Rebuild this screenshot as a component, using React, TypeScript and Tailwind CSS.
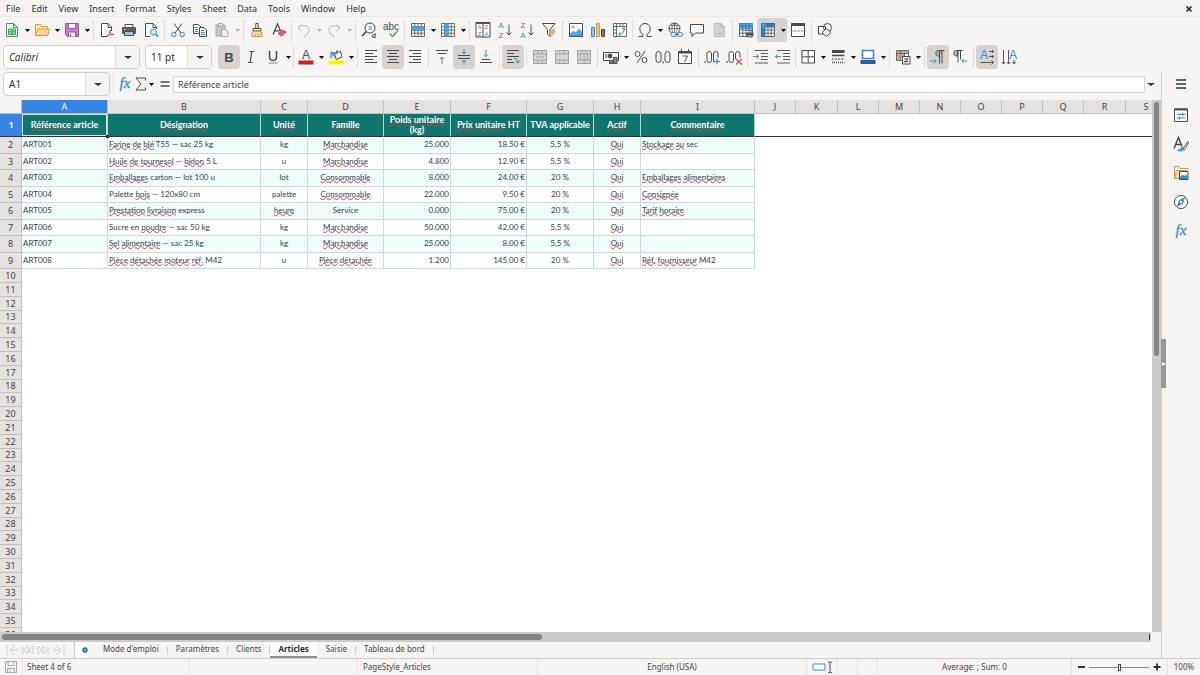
import type { ReactNode } from "react";
import clsx from "clsx";

const INK = "#4a4a48";
const BLUE = "#2f8fd8";
const ORANGE = "#e8923a";
const RED = "#e0404a";
const GREEN = "#3aa655";
const PURPLE = "#a34fb0";

function Glyph({ x, y, size = 8, fill = INK, bold, children }: { x: number; y: number; size?: number; fill?: string; bold?: boolean; children: string }) {
  return (
    <text x={x} y={y} fontSize={size} fill={fill} stroke="none" textAnchor="middle" fontWeight={bold ? 700 : 400}>
      {children}
    </text>
  );
}

const gridLines = "M1.5 1.5h13v13h-13zM1.5 4.8h13M1.5 8h13M1.5 11.2h13M4.8 1.5v13M8 1.5v13M11.2 1.5v13";

const icons: Record<string, ReactNode> = {
  new: (
    <>
      <path d="M2.500 1.500h7l4 4v9h-11z" fill="#fff" stroke={GREEN} />
      <path d="M9.500 1.500v4h4" stroke={GREEN} />
      <path d="M4.500 7h7v5.500h-7zM4.500 9.800h7M8 7v5.500" fill="#9bdcab" stroke={GREEN} />
    </>
  ),
  open: (
    <>
      <path d="M1.500 13.500v-11h5l1 2h6v3" fill="#fbe3b8" stroke={ORANGE} />
      <path d="M1.500 13.500l2.500-6.500h11.500l-2 6.500z" fill="#fcd9a0" stroke={ORANGE} />
    </>
  ),
  save: (
    <>
      <path d="M1.500 1.500h13v13h-11l-2-2z" fill="#c779d2" stroke={PURPLE} />
      <path d="M4.500 1.500h7v5h-7z" fill="#fff" stroke={PURPLE} />
      <path d="M4.500 14.500v-4.500h7v4.500" fill="#fff" stroke={PURPLE} />
      <path d="M6.500 11.500v3" stroke={PURPLE} />
    </>
  ),
  pdf: (
    <>
      <path d="M12.500 9v-4l-3.500-3.500h-6.500v13h6" fill="#fff" />
      <path d="M9 1.500v4h3.500" />
      <path d="M8 14.500c2.500-2.500 3.500-4.500 3.200-6.500-.8 3 1.300 5 3.800 4.500-2.500-.5-5 .5-7 2z" stroke={RED} />
    </>
  ),
  print: (
    <>
      <path d="M4 5.500v-3h8v3" fill="#fff" />
      <rect x="1" y="5" width="14" height="7" rx="1" fill="#5a5a58" stroke="none" />
      <path d="M3.500 9.500h9v4h-9z" fill="#8cc8f0" />
      <path d="M3 7.500h1.500" stroke="#fff" />
    </>
  ),
  preview: (
    <>
      <path d="M13.500 7v-2l-3.500-3.500h-7.500v13h5" fill="#fff" />
      <path d="M10 1.500v4h3.500" />
      <circle cx="10.500" cy="10" r="3" fill="#cfe6f8" stroke={BLUE} />
      <path d="M12.800 12.300l2.200 2.400" stroke={BLUE} strokeWidth="1.500" />
    </>
  ),
  cut: (
    <>
      <path d="M4 1.500l7 9.500M12 1.500l-7 9.500" />
      <circle cx="3.800" cy="12.500" r="2.200" stroke={BLUE} />
      <circle cx="12.200" cy="12.500" r="2.200" stroke={BLUE} />
    </>
  ),
  copy: (
    <>
      <path d="M1.500 2.500h5l2.500 2.500v6.500h-7.500z" fill="#fff" />
      <path d="M3 5.500h3M3 7.500h3M3 9.500h3" stroke={BLUE} />
      <path d="M7.500 5.500h4.500l2.500 2.500v6.500h-7z" fill="#fff" />
      <path d="M9 8.500h3M9 10.500h4M9 12.500h4" stroke={BLUE} />
    </>
  ),
  paste: (
    <>
      <path d="M2 3h9v11h-9z" fill="#c9c8c6" stroke="#a8a7a5" />
      <path d="M4.500 1.500h4v3h-4z" fill="#e6e5e3" stroke="#a8a7a5" />
      <path d="M7.500 7.500h4l2.500 2.500v4.500h-6.500z" fill="#f0efee" stroke="#a8a7a5" />
    </>
  ),
  brush: (
    <>
      <path d="M6.800 1.500h2.400v5h-2.400z" fill="#fff" />
      <path d="M4 6.500h8v2.500h-8z" fill="#fff" />
      <path d="M4 9.500l-1.500 5h11l-1.500-5z" fill="#fcd9a0" stroke={ORANGE} />
      <path d="M6 14.500l.500-2.500M10 14.500v-2.500" stroke={ORANGE} />
    </>
  ),
  clear: (
    <>
      <path d="M2 12.500l4.500-10.500 3 7M3.500 8.800h5" strokeWidth="1.300" />
      <path d="M7 11.500l4.500-3.500 3.500 2-4.500 4z" fill="#f0606a" stroke={RED} />
    </>
  ),
  undo: <path d="M5.500 2.500l-3.500 3.500 3.500 3.500M2 6c4-4.500 12-2 11 3-.5 2-2.500 4-5 5.500" stroke="#b9b8b6" />,
  redo: <path d="M10.500 2.500l3.500 3.500-3.500 3.500M14 6c-4-4.500-12-2-11 3 .5 2 2.500 4 5 5.500" stroke="#b9b8b6" />,
  find: (
    <>
      <circle cx="9" cy="6" r="5" />
      <path d="M5.200 9.600l-4.200 4.400" strokeWidth="1.800" />
      <Glyph x={9} y={7.500} size={7} fill={BLUE}>a</Glyph>
      <Glyph x={12.800} y={16} size={7} bold>d</Glyph>
    </>
  ),
  spell: (
    <>
      <Glyph x={8} y={7.500} size={10}>abc</Glyph>
      <path d="M6.500 11.500l3 3 5.500-6" stroke={GREEN} strokeWidth="1.300" />
    </>
  ),
  row: (
    <>
      <path d={gridLines} fill="#fff" strokeWidth=".8" />
      <path d="M1.500 4.800h13v3.400h-13z" fill="#4aa8f0" stroke={BLUE} strokeWidth=".6" />
    </>
  ),
  column: (
    <>
      <path d={gridLines} fill="#fff" strokeWidth=".8" />
      <path d="M4.800 1.500h3.400v13h-3.400z" fill="#4aa8f0" stroke={BLUE} strokeWidth=".6" />
    </>
  ),
  sort: (
    <>
      <path d="M1 .5h14v14.500h-14zM8 1v14" fill="#fff" />
      <path d="M1 1h14" strokeWidth="1.800" />
      <Glyph x={4.600} y={7.300} size={6} fill={BLUE}>A</Glyph>
      <Glyph x={4.600} y={14.300} size={6} fill={PURPLE}>Z</Glyph>
      <Glyph x={11.400} y={7.300} size={6} fill={PURPLE}>Z</Glyph>
      <Glyph x={11.400} y={14.300} size={6} fill={BLUE}>A</Glyph>
    </>
  ),
  az: (
    <>
      <Glyph x={4} y={6} fill={BLUE}>A</Glyph>
      <Glyph x={4} y={15.500} fill={PURPLE}>Z</Glyph>
      <path d="M12 2.500v10.500M9.500 10.500l2.500 2.500 2.500-2.500" />
    </>
  ),
  za: (
    <>
      <Glyph x={4} y={6} fill={PURPLE}>Z</Glyph>
      <Glyph x={4} y={15.500} fill={BLUE}>A</Glyph>
      <path d="M12 2.500v10.500M9.500 10.500l2.500 2.500 2.500-2.500" />
    </>
  ),
  filter: (
    <>
      <path d="M1.500 1.500h12.500l-5 6v7l-2.500-2.500v-4.500z" fill="#fff" />
      <path d="M11.500 7l-3 4h3l-1.500 3.500 4.500-5h-2.500l1.500-2.500z" fill="#fcb860" stroke={ORANGE} strokeWidth=".7" />
    </>
  ),
  image: (
    <>
      <path d="M1.500 1.500h13v13h-13z" fill="#fff" />
      <path d="M2 14v-1.500l3.500-3.500 2 2 3.500-4 3 3.500v3.500z" fill="#4aa8f0" stroke={BLUE} strokeWidth=".6" />
      <circle cx="5" cy="5" r="1.300" fill="#fcb860" stroke={ORANGE} strokeWidth=".6" />
    </>
  ),
  chart: (
    <>
      <path d="M1.500 5.500h3v9h-3z" fill="#8cc8f0" stroke={BLUE} />
      <path d="M6.500 1.500h3v13h-3z" fill="#fcc070" stroke={ORANGE} />
      <path d="M11.500 7.500h3v7h-3z" fill="#777" />
    </>
  ),
  pivot: (
    <>
      <path d="M1.500 1.500h13v13h-13zM1.500 4.500h13M4.500 1.500v13M8 1.500v3M11 1.500v3M1.500 8h3M1.500 11h3" fill="#fff" strokeWidth=".8" />
      <path d="M10 6.500l2.500-.5-.3 2.500M12.300 6.200c0 4-2 6-5 6.300M8.500 10.500l-2 2 2.200 1.500" stroke={BLUE} />
    </>
  ),
  omega: <path d="M1.500 14.500h4.500v-2c-5-3-4-11 2-11s7 8 2 11v2h4.500" />,
  link: (
    <>
      <circle cx="7.500" cy="6.500" r="5.500" fill="#fff" />
      <path d="M2 6.500h11M7.500 1v11M7.500 1c-3.500 3-3.500 8 0 11M7.500 1c3.500 3 3.500 8 0 11M3 3.500h9" strokeWidth=".7" />
      <rect x="4" y="10.500" width="5.500" height="4" rx="2" fill="#f6f5f4" stroke={BLUE} />
      <rect x="10" y="10.500" width="5.500" height="4" rx="2" fill="#f6f5f4" stroke={BLUE} />
      <path d="M7.500 12.500h4.500" stroke={BLUE} />
    </>
  ),
  comment: <path d="M1.500 2.500h13v8.500h-8l-3.500 3.500v-3.500h-1.500z" fill="#fff" />,
  header: (
    <>
      <path d="M3 1.500h7l3.500 3.500v9.500h-10.500z" fill="#d3d2d0" stroke="#c2c1bf" />
      <path d="M5 11.500h6M10 1.500v3.500h3.500" stroke="#b4b3b1" />
    </>
  ),
  printArea: (
    <>
      <path d={gridLines} fill="#fff" strokeWidth=".8" />
      <path d="M1.500 1.500h13v5h-13z" fill="#4aa8f0" stroke={BLUE} strokeWidth=".7" />
      <path d="M1.500 4h13M4.800 1.500v5M8 1.500v5M11.200 1.500v5" stroke="#226ca8" strokeWidth=".7" />
      <rect x="8" y="10.500" width="7.500" height="3" rx=".5" fill="#5a5a58" stroke="none" />
      <path d="M9.500 8.500h4.500v2M9.500 13h4.500v2h-4.500z" fill="#a8d4f4" strokeWidth=".8" />
    </>
  ),
  freeze: (
    <>
      <path d={gridLines} fill="#fff" strokeWidth=".8" />
      <path d="M1.500 1.500h13v3.300h-9.700v9.700h-3.300z" fill="#2f8fd8" stroke="#226ca8" strokeWidth=".7" />
      <path d="M4.800 1.500v3.300M8 1.500v3.300M11.200 1.500v3.300M1.500 8h3.300M1.500 11.200h3.300" stroke="#1a5c92" strokeWidth=".7" />
      <path d="M3.500 0v6M.8 1.500l5.400 3M6.200 1.500l-5.400 3" stroke="#58b0f0" strokeWidth=".7" />
    </>
  ),
  split: (
    <>
      <path d="M1.500 1.500h13v13h-13z" fill="#fff" />
      <path d="M1.500 2.500h13" strokeWidth="3" />
      <path d="M.5 9h15" stroke={BLUE} strokeDasharray="2.500 1" />
    </>
  ),
  shapes: (
    <>
      <circle cx="10.500" cy="5.500" r="4" />
      <path d="M1.500 4.500h7v7.500h-7z" />
      <path d="M9.500 6.500l4.500 4-4.500 4-4.500-4z" fill="#f6f5f4" />
    </>
  ),
  bold: <Glyph x={8} y={12.500} size={13} bold>B</Glyph>,
  italic: <path d="M6.500 2.500h4.500M5 13.500h4.500M8.800 2.500l-1.700 11" strokeWidth="1.200" />,
  underline: (
    <>
      <path d="M4.500 2v6c0 4.500 7 4.500 7 0v-6" strokeWidth="1.500" />
      <path d="M3.500 14h9" stroke="#5aa9ea" strokeWidth="1.200" />
    </>
  ),
  fontColor: (
    <>
      <Glyph x={8} y={10} size={12}>A</Glyph>
      <path d="M.5 13.500h15" stroke="#c9211e" strokeWidth="4" />
    </>
  ),
  highlight: (
    <>
      <path d="M6.500 4l6-1.500 1.500 5.500-6 2.500z" fill="#fff" />
      <path d="M3 9.500v-6l4.500 1M3.500 4l4.500 5" stroke={BLUE} strokeWidth="1.300" />
      <path d="M9 1v4.500" />
      <path d="M.5 13.500h15" stroke="#fdf200" strokeWidth="4" />
    </>
  ),
  left: <path d="M2 1.500h12M2 4.500h8M2 7.500h12M2 10.500h8M2 13.500h12" />,
  center: <path d="M2 1.500h12M4 4.500h8M2 7.500h12M4 10.500h8M2 13.500h12" />,
  right: <path d="M2 1.500h12M6 4.500h8M2 7.500h12M6 10.500h8M2 13.500h12" />,
  top: (
    <>
      <path d="M2 1.500h12M4 4.500h8" />
      <path d="M8 15v-7M6 10l2-2 2 2" stroke={BLUE} />
    </>
  ),
  middle: (
    <>
      <path d="M2 6.500h12M2 9.500h12" />
      <path d="M8 0v4.500M6 3l2 2 2-2M8 16v-4.500M6 13l2-2 2 2" stroke={BLUE} />
    </>
  ),
  bottom: (
    <>
      <path d="M4 10.500h8M2 13.500h12" />
      <path d="M8 1v6.500M6 5.500l2 2 2-2" stroke={BLUE} />
    </>
  ),
  wrap: (
    <>
      <path d="M2 1.500h12M2 4.500h7M2 7.500h12M2 10.500h5M2 13.500h7" />
      <path d="M9 9.500c3 0 4 1 4 4M10.500 12l2.500 2 2-2.500" stroke={BLUE} />
    </>
  ),
  merge: <path d="M1.500 1.500h13v13h-13zM1.500 5h13M1.500 11h13M5.800 1.500v3.500M10.200 1.500v3.500M5.800 11v3.500M10.200 11v3.500M4 8h8" fill="#d8d7d5" stroke="#a3a2a0" />,
  mergeAll: <path d="M1.500 1.500h13v13h-13zM1.500 5h13M1.500 11h13M5.800 1.500v3.500M10.200 1.500v3.500M5.800 11v3.500M10.200 11v3.500" fill="#d8d7d5" stroke="#a3a2a0" />,
  unmerge: <path d="M1.500 1.500h13v13h-13zM1.500 5h13M1.500 11h13M5.800 1.500v3.500M10.200 1.500v3.500M4.500 5v6M8 5v9.500M11.500 5v6" fill="#d8d7d5" stroke="#a3a2a0" />,
  currency: (
    <>
      <path d="M.5 3.500h15v8h-15z" fill="#f6f5f4" />
      <circle cx="7" cy="7" r="2" fill={INK} />
      <path d="M3 5v4" />
      <path d="M6.500 14.500v-3h3v3zM10.500 14.500v-6h3.500v6z" fill="#888" />
    </>
  ),
  percent: (
    <>
      <circle cx="4.500" cy="5" r="2.500" />
      <circle cx="11.500" cy="11" r="2.500" />
      <path d="M12 2l-8 12" />
    </>
  ),
  number: (
    <>
      <rect x="1" y="2.500" width="5" height="11" rx="2.500" />
      <rect x="10" y="2.500" width="5" height="11" rx="2.500" />
      <path d="M8 12v2.500" />
    </>
  ),
  date: (
    <>
      <path d="M1.500 2.500h13v12h-13z" fill="#fff" />
      <path d="M1.500 3.500h13" strokeWidth="2" />
      <path d="M4.500 0v3M11.500 0v3M5.500 7h5l-3 6" />
    </>
  ),
  addDecimal: (
    <>
      <path d="M1 12v2" />
      <rect x="3" y="2.500" width="4.500" height="11" rx="2.200" />
      <path d="M14 8.500v-3.500a2.200 2.500 0 0 0-4.500 0v6c0 1 .3 2 1 2.500" />
      <path d="M13 9.500v6M10 12.500h6" stroke={BLUE} strokeWidth="1.200" />
    </>
  ),
  delDecimal: (
    <>
      <path d="M1 12v2" />
      <rect x="3" y="2.500" width="4.500" height="11" rx="2.200" />
      <path d="M14 8.500v-3.500a2.200 2.500 0 0 0-4.500 0v5" />
      <path d="M10 10l6 5.500M16 10l-6 5.500" stroke={RED} strokeWidth="1.200" />
    </>
  ),
  indent: (
    <>
      <path d="M2 1.500h13M8 4.500h7M8 7.500h7M8 10.500h7M2 14h13" strokeWidth=".9" />
      <path d="M0 7.500h5.500M3.500 5.500l2 2-2 2" stroke={BLUE} />
    </>
  ),
  outdent: (
    <>
      <path d="M2 1.500h13M8 4.500h7M8 7.500h7M8 10.500h7M2 14h13" strokeWidth=".9" />
      <path d="M6 7.500h-5.500M2.500 5.500l-2 2 2 2" stroke={BLUE} />
    </>
  ),
  borders: (
    <>
      <path d="M2 1.500h12.500v12.500h-12.500z" fill="#fff" />
      <path d="M8.200 1.500v12.500M2 7.800h12.500" />
    </>
  ),
  lineStyle: (
    <>
      <path d="M2 2.500h12.500" strokeWidth="3" />
      <path d="M2 6.500h12.500" strokeWidth="1.500" />
      <path d="M2 10h12.500" strokeDasharray="2 1" />
      <path d="M2 13.500h12.500" strokeWidth="1.500" strokeDasharray="1 1" />
    </>
  ),
  lineColor: (
    <>
      <path d="M2.500 1.500h11v8h-11z" fill="#fff" stroke="#3f86c6" strokeWidth="1.600" />
      <path d="M.5 13h15" stroke="#2a6099" strokeWidth="4" />
    </>
  ),
  conditional: (
    <>
      <path d="M1.500 1.500h12v10h-12zM1.500 4.500h12M1.500 8h12M5.500 1.500v10M9.500 1.500v10" fill="#fff" strokeWidth=".8" />
      <path d="M2 2h3v2h-3zM2 5h7v2.500h-7z" fill="#f28a80" stroke="none" />
      <path d="M6 2h7v2h-7zM2 8.500h3v2.500h-3z" fill="#7cc98c" stroke="none" />
      <path d="M7.500 7.500h7.500v7.500h-7.500z" fill="#fff" />
      <path d="M9 10h4.500M9 12.500h4.500M12.500 8.500l-2.500 5.500" strokeWidth=".9" />
    </>
  ),
  ltr: (
    <>
      <path d="M14.500 1.500h-6c-3.500 0-3.500 5.500 0 5.500h1" fill="#b5b3b0" />
      <path d="M9.500 1.500v13M12 1.500v13" />
      <path d="M0 12h6M4 9.800l2.200 2.200-2.200 2.200" stroke={BLUE} />
    </>
  ),
  rtl: (
    <>
      <path d="M10.500 1.500h-6c-3.500 0-3.500 5.500 0 5.500h1v-5.500" fill="#b5b3b0" />
      <path d="M6 1.500v12M8.500 1.500v9" />
      <path d="M15.500 12h-5.500M12 9.800l-2.200 2.200 2.200 2.200" stroke={BLUE} />
    </>
  ),
  horizontalText: (
    <>
      <Glyph x={5} y={10} size={12} fill={BLUE}>A</Glyph>
      <path d="M10 2.500h4.500M13 1l1.500 1.500-1.500 1.500M10 7.500h4.500M13 6l1.500 1.500-1.500 1.500M1.500 13.500h13M12.500 11.500l2 2-2 2" strokeWidth=".9" />
    </>
  ),
  verticalText: (
    <>
      <Glyph x={12} y={10} size={12} fill={BLUE}>A</Glyph>
      <path d="M2.500 1v14M.8 13l1.700 2 1.700-2M7.500 1v14M5.800 13l1.700 2 1.700-2M13 11v4M11.300 13l1.700 2 1.700-2" strokeWidth=".9" />
    </>
  ),
  fx: (
    <text x="8" y="12" fontSize="15" fill={BLUE} stroke={BLUE} strokeWidth=".3" textAnchor="middle" fontStyle="italic" fontFamily="Liberation Serif, serif">
      fx
    </text>
  ),
  sigma: <path d="M12.500 4.500v-2.500h-9.500l5 6-5 6h9.500v-2.500" />,
  equals: <path d="M3.500 6h9M3.500 10h9" strokeWidth="1.600" />,
  menu: <path d="M3 4h10M3 8h10M3 12h10" stroke="#2e3436" strokeWidth="1.500" />,
  properties: (
    <>
      <path d="M1.500 2h13v12.500h-13z" fill="#fff" />
      <path d="M1.500 2.500h13" strokeWidth="2" />
      <path d="M4 7.500h8M4 11h8M10 6v3M6.500 9.500v3" stroke={BLUE} />
    </>
  ),
  styles: (
    <>
      <path d="M1 12.500l4.500-11 3.500 9M2.500 8.500h5.500" strokeWidth="1.500" />
      <path d="M15 5.500l-5 7 1.500 1 4-6.500z" fill="#fff" strokeWidth=".9" />
      <path d="M4.500 14.500c2 .5 6 1 6.500-1.500l-1.500-1.500c-2 0-2 2-5 3z" fill="#4aa8f0" stroke={BLUE} />
    </>
  ),
  gallery: (
    <>
      <path d="M1.500 13.500v-12h4.500l1 2h8v2" fill="#fff" stroke={ORANGE} />
      <path d="M3.500 5.500h10v8h-12z" fill="#fcd9a0" stroke={ORANGE} />
      <path d="M6.500 6.500h8.500v8h-8.500z" fill="#fff" />
      <path d="M7 14v-2l2.500-2.500 2 1.500 1.500-1.500 1.500 1.500v3z" fill="#2f8fd8" stroke="none" />
    </>
  ),
  navigator: (
    <>
      <circle cx="8" cy="8" r="6.500" fill="#fff" />
      <path d="M11.500 4l-5 2.500-2 5.500 5-2.500z" fill="#2f8fd8" stroke={BLUE} />
      <circle cx="8" cy="8" r="1.200" fill="#fff" stroke="none" />
    </>
  ),
  disk: (
    <path d="M2.500 2.500h11v11h-11zM5 2.500v4h6v-4M4.500 13.500v-4h7v4M7 11v2" stroke="#a3a2a0" strokeWidth=".9" />
  ),
  selection: <path d="M2 5h12v6h-12z" fill="#fff" stroke={BLUE} />,
  caret: <path d="M1 3h1.500l.5.500.5-.5h1.500M3 3.500v9.500M1 13.500h1.500l.5-.5.5.5h1.500" />,
};

function Icon({ name }: { name: string }) {
  return (
    <svg viewBox="0 0 16 16" className="size-4 shrink-0 overflow-visible" fill="none" stroke={INK} fontFamily="Liberation Sans, sans-serif" aria-hidden="true">
      {icons[name]}
    </svg>
  );
}

function Arrow({ className = "w-[5px] text-black" }: { className?: string }) {
  return (
    <svg viewBox="0 0 8 4" className={clsx("h-[3px] shrink-0", className)} fill="currentColor" preserveAspectRatio="none" aria-hidden="true">
      <path d="M0 0h8l-4 4z" />
    </svg>
  );
}

interface Tool {
  name: string;
  label: string;
  menu?: boolean;
  active?: boolean;
  disabled?: boolean;
}

function ToolButton({ name, label, menu, active, disabled }: Tool) {
  return (
    <div className={clsx("flex h-6 items-center rounded-sm", active && "bg-[#d5d2cf]")}>
      <button type="button" aria-label={label} title={label} disabled={disabled} className="flex h-6 w-[22px] items-center justify-center">
        <Icon name={name} />
      </button>
      {menu && (
        <button type="button" aria-label={`${label} options`} className="flex h-6 w-2 items-center justify-center pt-px">
          <Arrow className={disabled ? "w-[5px] text-[#b9b8b6]" : "w-[5px] text-black"} />
        </button>
      )}
    </div>
  );
}

function Separator({ tight }: { tight?: boolean }) {
  return <div className={clsx("h-[22px] w-px shrink-0 bg-[#e3e1df]", tight ? "mx-px" : "mx-0.5")} />;
}

function ToolGroup({ tools, tight, last }: { tools: Tool[]; tight?: boolean; last?: boolean }) {
  return (
    <div className="flex shrink-0 items-center">
      {tools.map((tool) => (
        <ToolButton key={tool.name} {...tool} />
      ))}
      {!last && <Separator tight={tight} />}
    </div>
  );
}

const menus = ["File", "Edit", "View", "Insert", "Format", "Styles", "Sheet", "Data", "Tools", "Window", "Help"];

const standardBar: { tools: Tool[]; tight?: boolean }[] = [
  {
    tools: [
      { name: "new", label: "New", menu: true },
      { name: "open", label: "Open", menu: true },
      { name: "save", label: "Save", menu: true },
    ],
  },
  {
    tools: [
      { name: "pdf", label: "Export as PDF" },
      { name: "print", label: "Print" },
      { name: "preview", label: "Print preview" },
    ],
  },
  {
    tools: [
      { name: "cut", label: "Cut" },
      { name: "copy", label: "Copy" },
      { name: "paste", label: "Paste", menu: true, disabled: true },
    ],
  },
  {
    tight: true,
    tools: [
      { name: "brush", label: "Clone formatting" },
      { name: "clear", label: "Clear formatting" },
    ],
  },
  {
    tools: [
      { name: "undo", label: "Undo", menu: true, disabled: true },
      { name: "redo", label: "Redo", menu: true, disabled: true },
    ],
  },
  {
    tools: [
      { name: "find", label: "Find and replace" },
      { name: "spell", label: "Spelling" },
    ],
  },
  {
    tools: [
      { name: "row", label: "Row", menu: true },
      { name: "column", label: "Column", menu: true },
    ],
  },
  {
    tools: [
      { name: "sort", label: "Sort" },
      { name: "az", label: "Sort ascending" },
      { name: "za", label: "Sort descending" },
      { name: "filter", label: "AutoFilter" },
    ],
  },
  {
    tight: true,
    tools: [
      { name: "image", label: "Insert image" },
      { name: "chart", label: "Insert chart" },
      { name: "pivot", label: "Pivot table" },
    ],
  },
  {
    tools: [
      { name: "omega", label: "Special character", menu: true },
      { name: "link", label: "Hyperlink" },
      { name: "comment", label: "Comment" },
      { name: "header", label: "Headers and footers", disabled: true },
    ],
  },
  {
    tools: [
      { name: "printArea", label: "Define print area" },
      { name: "freeze", label: "Freeze rows and columns", menu: true, active: true },
      { name: "split", label: "Split window" },
    ],
  },
  { tools: [{ name: "shapes", label: "Draw functions" }] },
];

const formattingBar: { tools: Tool[]; tight?: boolean }[] = [
  {
    tight: true,
    tools: [
      { name: "bold", label: "Bold", active: true },
      { name: "italic", label: "Italic" },
      { name: "underline", label: "Underline", menu: true },
    ],
  },
  {
    tools: [
      { name: "fontColor", label: "Font color", menu: true },
      { name: "highlight", label: "Background color", menu: true },
    ],
  },
  {
    tools: [
      { name: "left", label: "Align left" },
      { name: "center", label: "Center horizontally", active: true },
      { name: "right", label: "Align right" },
    ],
  },
  {
    tools: [
      { name: "top", label: "Align top" },
      { name: "middle", label: "Center vertically", active: true },
      { name: "bottom", label: "Align bottom" },
    ],
  },
  { tools: [{ name: "wrap", label: "Wrap text", active: true }] },
  {
    tools: [
      { name: "merge", label: "Merge and center", disabled: true },
      { name: "mergeAll", label: "Merge cells", disabled: true },
      { name: "unmerge", label: "Unmerge cells", disabled: true },
    ],
  },
  {
    tools: [
      { name: "currency", label: "Currency", menu: true },
      { name: "percent", label: "Percent" },
      { name: "number", label: "Number" },
      { name: "date", label: "Date" },
    ],
  },
  {
    tools: [
      { name: "addDecimal", label: "Add decimal place" },
      { name: "delDecimal", label: "Delete decimal place" },
    ],
  },
  {
    tight: true,
    tools: [
      { name: "indent", label: "Increase indent" },
      { name: "outdent", label: "Decrease indent" },
    ],
  },
  {
    tools: [
      { name: "borders", label: "Borders", menu: true },
      { name: "lineStyle", label: "Border style", menu: true },
      { name: "lineColor", label: "Border color", menu: true },
    ],
  },
  { tools: [{ name: "conditional", label: "Conditional formatting", menu: true }] },
  {
    tools: [
      { name: "ltr", label: "Left to right", active: true },
      { name: "rtl", label: "Right to left" },
    ],
  },
  {
    tools: [
      { name: "horizontalText", label: "Text direction horizontal", active: true },
      { name: "verticalText", label: "Text direction vertical" },
    ],
  },
];

function ComboBox({ label, value, className, italic }: { label: string; value: string; className: string; italic?: boolean }) {
  return (
    <div className={clsx("flex h-6 shrink-0 overflow-hidden rounded border border-[#d3cfcb] bg-white", className)}>
      <input aria-label={label} defaultValue={value} className={clsx("min-w-0 flex-1 px-[5px] text-[10px] outline-none", italic && "italic")} />
      <button type="button" aria-label={`${label} list`} className="flex w-6 shrink-0 items-center justify-center border-l border-[#dedbd8] bg-[#f6f5f4]">
        <Arrow className="h-1 w-2 text-[#2e3436]" />
      </button>
    </div>
  );
}

const columns = [
  { id: "A", width: "w-[86px]" },
  { id: "B", width: "w-[153px]" },
  { id: "C", width: "w-[47px]" },
  { id: "D", width: "w-[76px]" },
  { id: "E", width: "w-[67px]" },
  { id: "F", width: "w-[76px]" },
  { id: "G", width: "w-[67px]" },
  { id: "H", width: "w-[47px]" },
  { id: "I", width: "w-[114px]" },
  { id: "J", width: "w-[41px]" },
  { id: "K", width: "w-[42px]" },
  { id: "L", width: "w-[41px]" },
  { id: "M", width: "w-[41px]" },
  { id: "N", width: "w-[41px]" },
  { id: "O", width: "w-[41px]" },
  { id: "P", width: "w-[41px]" },
  { id: "Q", width: "w-[41px]" },
  { id: "R", width: "w-[42px]" },
  { id: "S", width: "w-[41px]" },
];

const align = ["text-left", "text-left", "text-center", "text-center", "text-right", "text-right", "text-center", "text-center", "text-left"];

const titles = ["Référence article", "Désignation", "Unité", "Famille", "Poids unitaire (kg)", "Prix unitaire HT", "TVA applicable", "Actif", "Commentaire"];

const articles = [
  ["ART001", "Farine de blé T55 — sac 25 kg", "kg", "Marchandise", "25.000", "18.50 €", "5,5 %", "Oui", "Stockage au sec"],
  ["ART002", "Huile de tournesol — bidon 5 L", "u", "Marchandise", "4.800", "12.90 €", "5,5 %", "Oui", ""],
  ["ART003", "Emballages carton — lot 100 u", "lot", "Consommable", "8.000", "24.00 €", "20 %", "Oui", "Emballages alimentaires"],
  ["ART004", "Palette bois — 120x80 cm", "palette", "Consommable", "22.000", "9.50 €", "20 %", "Oui", "Consignée"],
  ["ART005", "Prestation livraison express", "heure", "Service", "0.000", "75.00 €", "20 %", "Oui", "Tarif horaire"],
  ["ART006", "Sucre en poudre — sac 50 kg", "kg", "Marchandise", "50.000", "42.00 €", "5,5 %", "Oui", ""],
  ["ART007", "Sel alimentaire — sac 25 kg", "kg", "Marchandise", "25.000", "8.00 €", "5,5 %", "Oui", ""],
  ["ART008", "Pièce détachée moteur réf. M42", "u", "Pièce détachée", "1.200", "145.00 €", "20 %", "Oui", "Réf. fournisseur M42"],
];

// words the English (USA) dictionary does not know
const unknownWords = new Set(
  "Farine de blé Huile tournesol bidon Emballages bois Prestation livraison poudre Sel alimentaire Pièce détachée moteur réf. heure Marchandise Consommable Oui Stockage au alimentaires Consignée Tarif horaire Réf. fournisseur Référence Désignation Unité Famille Poids unitaire Prix Actif Commentaire".split(" "),
);

function Spellchecked({ text }: { text: string }) {
  return text.split(" ").map((word, i) => (
    <span key={i}>
      {i > 0 && " "}
      {unknownWords.has(word) ? (
        <span className="underline decoration-[#e03a3a] decoration-wavy decoration-1 underline-offset-[-1px] [text-decoration-skip-ink:none]">{word}</span>
      ) : (
        word
      )}
    </span>
  ));
}

const headCell = "border-r border-b border-[#c1c0bf] p-0 text-[9px] leading-[10px] font-normal";
const emptyRows = Array.from({ length: 27 }, (_, i) => i + 10);

function Sheet() {
  return (
    <table className="w-px table-fixed border-separate border-spacing-0">
      <colgroup>
        <col className="w-[22px]" />
        {columns.map((col) => (
          <col key={col.id} className={col.width} />
        ))}
      </colgroup>
      <thead>
        <tr className="h-3.5">
          <td className={clsx(headCell, "bg-[#f6f5f4]")} />
          {columns.map((col, i) => (
            <th
              key={col.id}
              scope="col"
              className={clsx(headCell, i === 0 ? "bg-[#3584e4] font-bold text-white" : "bg-[#e3e2e1] text-[#444]")}
            >
              {col.id}
            </th>
          ))}
        </tr>
      </thead>
      <tbody>
        <tr className="h-[23px]">
          <th scope="row" className="border-b border-[#333] bg-[#3584e4] p-0 text-[9px] leading-[10px] font-bold text-white">
            1
          </th>
          {titles.map((title, i) => (
            <th
              key={title}
              className="relative border-r border-b border-r-[#b9d3d0] border-b-[#333] bg-[#0f766e] px-0 pt-0 pb-px font-[Lato,sans-serif] text-[9px] leading-[10px] font-bold text-white"
            >
              <Spellchecked text={title} />
              {i === 0 && (
                <>
                  <div className="absolute inset-0 border border-[#d8e4e2]" />
                  <div className="absolute -right-0.5 -bottom-0.5 size-[3px] bg-[#333]" />
                </>
              )}
            </th>
          ))}
          <td colSpan={columns.length - titles.length} className="border-b border-[#333]" />
        </tr>
        {articles.map((article, i) => (
          <tr key={article[0]} className={i % 2 ? "h-4" : "h-[17px] bg-[#f0fdfa]"}>
            <th scope="row" className={clsx(headCell, "bg-[#e3e2e1] text-[#444]")}>
              {i + 2}
            </th>
            {article.map((value, j) => (
              <td
                key={j}
                className={clsx(
                  "border-r border-b border-[#cbd9df] px-px pt-0 pb-0.5 font-[Lato,sans-serif] text-[8px] leading-[10px] whitespace-nowrap text-[#334155]",
                  align[j],
                )}
              >
                <Spellchecked text={value} />
              </td>
            ))}
            <td colSpan={columns.length - titles.length} className="bg-white" />
          </tr>
        ))}
        {emptyRows.map((row) => (
          <tr key={row} className={row % 5 === 3 ? "h-[13px]" : "h-3.5"}>
            <th scope="row" className={clsx(headCell, "bg-[#e3e2e1] text-[#444]")}>
              {row}
            </th>
            <td colSpan={columns.length} />
          </tr>
        ))}
      </tbody>
    </table>
  );
}

const sheets = ["Mode d'emploi", "Paramètres", "Clients", "Articles", "Saisie", "Tableau de bord"];

function SheetTabs() {
  return (
    <div className="flex h-4 items-stretch pl-[5px]">
      <div className="flex w-[61px] items-center justify-between text-[#cfcecc]">
        {["M2 1v10M10 1l-5 5 5 5M5 6h8", "M2 2v8M7 2l-4 4 4 4zM12 2l-4 4 4 4z", "M12 2v8M7 2l4 4-4 4zM2 2l4 4-4 4z", "M12 1v10M4 1l5 5-5 5M9 6h-8"].map((d, i) => (
          <button key={d} type="button" disabled aria-label={["First sheet", "Previous sheet", "Next sheet", "Last sheet"][i]}>
            <svg viewBox="0 0 14 12" className="h-3 w-3.5" fill="none" stroke="currentColor">
              <path d={d} />
            </svg>
          </button>
        ))}
      </div>
      <button type="button" aria-label="Add sheet" className="mr-[7px] ml-2 flex w-3.5 items-center justify-end border-l border-[#d0cfcd] bg-white">
        <svg viewBox="0 0 8 8" className="size-2" fill="none" stroke="#2a6fb8" strokeWidth="1.500">
          <circle cx="5" cy="4" r="2" />
          <path d="M3.500 4h3M5 2.500v3" strokeWidth=".8" />
        </svg>
      </button>
      {sheets.map((name) => {
        const active = name === "Articles";
        return (
          <div key={name} className="flex items-center">
            <button
              type="button"
              className={clsx(
                "h-4 border-b-2 px-2 text-[8px] leading-[14px]",
                active ? "border-[#8e8e8d] bg-white font-bold text-[#2a2a2a]" : "border-transparent text-[#444]",
              )}
            >
              {name}
            </button>
            <span className={clsx("h-2 w-px", !active && "bg-[#cfcecc]")} />
          </div>
        );
      })}
    </div>
  );
}

const statusCell = "flex items-center border-l border-[#e6e4e2] shrink-0";

function StatusBar() {
  return (
    <footer className="flex h-[17px] items-stretch border-t border-[#d0cecc] text-[8px] leading-[14px] text-[#444]">
      <div className="flex w-[22px] shrink-0 items-center justify-center">
        <Icon name="disk" />
      </div>
      <div className={clsx(statusCell, "w-[167px] pl-1")}>Sheet 4 of 6</div>
      <div className={clsx(statusCell, "w-[168px]")} />
      <div className={clsx(statusCell, "w-[180px] pl-[5px]")}>PageStyle_Articles</div>
      <div className={clsx(statusCell, "flex-1 justify-center")}>English (USA)</div>
      <div className={clsx(statusCell, "w-[31px] pl-1")}>
        <Icon name="selection" />
        <Icon name="caret" />
      </div>
      <div className={clsx(statusCell, "w-5")} />
      <div className={clsx(statusCell, "w-5")} />
      <div className={clsx(statusCell, "w-[194px] justify-center")}>Average: ; Sum: 0</div>
      <div className={clsx(statusCell, "w-24 gap-1 px-1.5")}>
        <button type="button" aria-label="Zoom out" className="h-0.5 w-[7px] shrink-0 bg-[#2e3436]" />
        <input
          type="range"
          aria-label="Zoom"
          min={0}
          max={100}
          defaultValue={50}
          className="h-px min-w-0 flex-1 appearance-none bg-[#8e8e8d] [&::-webkit-slider-thumb]:h-[7px] [&::-webkit-slider-thumb]:w-[3px] [&::-webkit-slider-thumb]:appearance-none [&::-webkit-slider-thumb]:border [&::-webkit-slider-thumb]:border-[#444] [&::-webkit-slider-thumb]:bg-white"
        />
        <button type="button" aria-label="Zoom in">
          <svg viewBox="0 0 8 8" className="size-2" stroke="#2e3436" strokeWidth="1.800">
            <path d="M4 .5v7M.5 4h7" />
          </svg>
        </button>
      </div>
      <div className={clsx(statusCell, "w-[33px] justify-center")}>100%</div>
    </footer>
  );
}

function FormulaBar() {
  return (
    <div className="flex items-center pt-px pr-[5px] pb-1 pl-[3px]">
      <ComboBox label="Name box" value="A1" className="w-[107px]" />
      <div className="mx-[3px] h-[22px] w-px bg-[#e3e1df]" />
      <button type="button" aria-label="Function wizard" className="flex h-6 w-4 items-center justify-center">
        <Icon name="fx" />
      </button>
      <button type="button" aria-label="Select function" className="flex h-6 w-6 items-center">
        <Icon name="sigma" />
        <Arrow />
      </button>
      <button type="button" aria-label="Formula" className="flex h-6 w-4 items-center justify-center">
        <Icon name="equals" />
      </button>
      <input
        aria-label="Input line"
        defaultValue="Référence article"
        className="h-[17px] min-w-0 flex-1 border border-[#d9d6d3] bg-white px-1 text-[9px] text-[#444] outline-none"
      />
      <button type="button" aria-label="Expand formula bar" className="ml-px flex h-6 w-2.5 items-center justify-center">
        <Arrow className="h-1 w-2 text-[#2e3436]" />
      </button>
    </div>
  );
}

export default function App() {
  return (
    <div className="flex h-screen flex-col overflow-hidden bg-[#f6f5f4] font-['Noto_Sans',sans-serif] text-[#2e3436]">
      <header className="flex h-[17px] shrink-0 items-center border-b border-[#ebe9e7] pt-px text-[9px] leading-[14px]">
        <nav className="flex flex-1 gap-[11px] pl-1.5">
          {menus.map((menu) => (
            <button key={menu} type="button">
              {menu}
            </button>
          ))}
        </nav>
        <button type="button" aria-label="Close document" className="mr-2">
          <svg viewBox="0 0 6 6" className="size-1.5" stroke="#2e3436" strokeWidth="1.600">
            <path d="M.5 .5l5 5M5.500 .5l-5 5" />
          </svg>
        </button>
      </header>

      <div className="flex shrink-0 pt-px pl-px">
        {standardBar.map((group, i) => (
          <ToolGroup key={i} {...group} last={i === standardBar.length - 1} />
        ))}
      </div>
      <div className="flex shrink-0 pt-[3px] pb-0.5 pl-[3px]">
        <ComboBox label="Font name" value="Calibri" className="mr-[5px] w-[137px]" italic />
        <ComboBox label="Font size" value="11 pt" className="mr-1.5 w-[67px]" />
        {formattingBar.map((group, i) => (
          <ToolGroup key={i} {...group} last={i === formattingBar.length - 1} />
        ))}
      </div>

      <div className="flex min-h-0 flex-1">
        <main className="flex min-w-0 flex-1 flex-col">
          <FormulaBar />
          <div className="flex min-h-0 flex-1">
            <div className="min-w-0 flex-1 overflow-hidden bg-white">
              <Sheet />
            </div>
            <div className="w-[9px] shrink-0 bg-[#cbcbcb] px-0.5 pt-0.5">
              <div className="h-[48%] rounded-full bg-[#848484]" />
            </div>
          </div>
          <div className="mr-2.5 flex h-2.5 shrink-0 items-center justify-between bg-[#cbcbcb] pr-px pl-0.5">
            <div className="h-1.5 w-[47%] rounded-full bg-[#848484]" />
            <div className="h-1.5 w-px bg-[#333]" />
          </div>
          <SheetTabs />
        </main>
        <aside className="relative flex w-[39px] shrink-0 flex-col items-center border-l border-[#d0cecc] pt-[5px]">
          <button type="button" aria-label="Sidebar settings" className="mb-2 flex size-4 items-center justify-center">
            <Icon name="menu" />
          </button>
          {["properties", "styles", "gallery", "navigator", "fx"].map((name) => (
            <button key={name} type="button" aria-label={name} className="flex h-[29px] w-6 items-center justify-center">
              <Icon name={name} />
            </button>
          ))}
          <button type="button" aria-label="Hide sidebar" className="absolute top-[268px] -left-px flex h-[49px] w-[5px] items-center justify-center bg-[#969696]">
            <svg viewBox="0 0 4 4" className="size-1" fill="#fff">
              <path d="M0 0l4 2-4 2z" />
            </svg>
          </button>
        </aside>
      </div>

      <StatusBar />
    </div>
  );
}
